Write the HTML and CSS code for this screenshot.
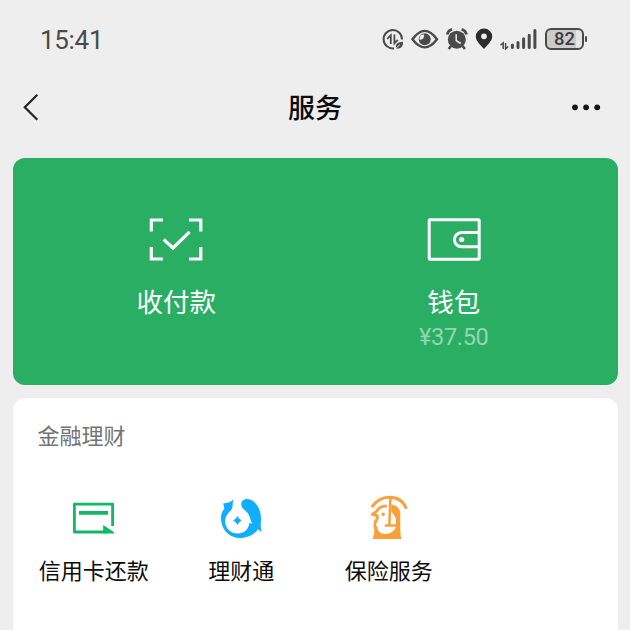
FILE: index.html
```html
<!DOCTYPE html>
<html lang="zh-CN">
<head>
<meta charset="utf-8">
<title>服务</title>
<link rel="stylesheet" href="styles.css">
</head>
<body>
<header class="status">
  <span class="clock">15:41</span>
  <div class="indicators">
    <svg class="i-data" width="22" height="22" viewBox="382 28 22 22" fill="none" stroke="#4a4a4a" stroke-width="2">
      <path d="M402 39.5A9.2 9.2 0 1 0 394 48.3"/>
      <path d="M387.2 39 390.8 35.2V44M394.4 34.5V43.3L397.8 39.8" stroke-width="1.8"/>
      <path d="M396 48.3C394.8 43.8 398 42 403 41.7 403.3 46.5 400.7 49.4 396 48.3Z" fill="#4a4a4a" stroke="none"/>
      <path d="M395 49 400 44.5" stroke="#eee" stroke-width=".9"/>
    </svg>
    <svg class="i-eye" width="28" height="20" viewBox="411 29 28 20">
      <path d="M412.5 39.2Q424.7 22.5 437 39.2 424.7 55.5 412.5 39.2Z" fill="none" stroke="#4a4a4a" stroke-width="2.4"/>
      <circle cx="424.7" cy="39.2" r="6" fill="#4a4a4a"/>
      <path d="M424 34.2A4 4 0 0 1 419.3 39.5L420.3 35.6Z" fill="#eee"/>
    </svg>
    <svg class="i-alarm" width="24" height="24" viewBox="445 27 24 24">
      <circle cx="456.8" cy="39.7" r="9" fill="#4a4a4a"/>
      <path d="M447.2 34.5Q448 30.5 452 29.2M461.6 29.2Q465.6 30.5 466.5 34.5" fill="none" stroke="#4a4a4a" stroke-width="2.7"/>
      <path d="m451 46-2.3 3M462.6 46l2.3 3" stroke="#4a4a4a" stroke-width="2.5"/>
      <path d="M456.2 34.3v6.3l4.5 2.9" fill="none" stroke="#eee" stroke-width="1.5"/>
    </svg>
    <svg class="i-pin" width="18" height="22" viewBox="475 28 18 22">
      <path fill-rule="evenodd" d="M484 49C479 43.5 475.8 40.3 475.8 36.5a8.2 7.9 0 0 1 16.4 0C492.2 40.3 489 43.5 484 49ZM484 33.4a2.9 2.9 0 1 0 0 5.8 2.9 2.9 0 0 0 0-5.8Z" fill="#2c2c2c"/>
    </svg>
    <svg class="i-signal" width="38" height="22" viewBox="500 28 38 22" fill="none" stroke="#4a4a4a">
      <path d="m500.5 45.3 2.7-2.4v6M505.6 42.9v6l2.6-2.4" stroke-width="1.5"/>
      <path d="M512.4 45v2.5M518 42.4v5.1M523.6 38.7v8.8M529.2 35.3v12.2M534.9 30.5v17" stroke-width="3" stroke-linecap="round"/>
    </svg>
    <span class="battery">82</span><i class="battery-cap"></i>
  </div>
</header>

<nav class="navbar">
  <svg class="back" width="20" height="32" viewBox="20 91 20 32" fill="none" stroke="#252525" stroke-width="2.2"><path d="M37.3 94.8 24.8 107.3 37.3 119.8"/></svg>
  <h1>服务</h1>
  <svg class="more" width="30" height="8" viewBox="571 103 30 8" fill="#161616"><circle cx="575" cy="107.3" r="2.9"/><circle cx="586.1" cy="107.3" r="2.9"/><circle cx="597.2" cy="107.3" r="2.9"/></svg>
</nav>

<main>
  <section class="hero">
    <div class="hero-item">
      <svg width="56" height="46" viewBox="148 217 56 46" fill="none" stroke="#fff" stroke-width="3.2">
        <path d="M163 220H151.3v11.5M189 220h11.8v11.5M151.3 247v12H163M200.8 247v12H189"/>
        <path d="m163.7 239.5 9.3 8.5 16.6-16.2"/>
      </svg>
      <span class="hero-name">收付款</span>
    </div>
    <div class="hero-item">
      <svg width="56" height="46" viewBox="426 217 56 46" fill="none" stroke="#fff" stroke-width="3">
        <rect x="429.2" y="219.8" width="50" height="39.4" rx=".8"/>
        <path d="M479 232.5H461.5a7.1 7.1 0 0 0 0 14.2H479"/>
        <circle cx="461.7" cy="239.5" r="2.6" fill="#fff" stroke="none"/>
      </svg>
      <span class="hero-name">钱包</span>
      <span class="balance">¥37.50</span>
    </div>
  </section>

  <section class="card">
    <h2>金融理财</h2>
    <div class="services">
      <div class="service">
        <svg width="50" height="50" viewBox="69 494 50 50">
          <path d="M112.6 526V504.2H74.4V532H107" fill="none" stroke="#10b965" stroke-width="2.8" stroke-linejoin="round"/>
          <path d="M79 511H108v3.8H79ZM103.2 525 114.1 532.2V533.4H103.2Z" fill="#10b965"/>
        </svg>
        <span>信用卡还款</span>
      </div>
      <div class="service">
        <svg width="50" height="50" viewBox="217 494 50 50" fill="#10aeff">
          <path d="M234.6 499.3C231.5 502.5 228 503.3 224.2 503.4L225.4 508.5C222 512.3 221.6 517 222.3 521.5 223.8 531.7 232 538 240.5 538 248.5 538 255.5 534.5 259 529.3L262.8 532.3C262 529 261.5 526.5 261.8 522.5 263.5 509 255.5 499.2 248 499.1 244.3 499 241.8 501.8 242.3 505 242.8 509.5 248 510.5 250 515.2 251.3 518 251.6 520.5 253.3 524L250.3 522.8C250 529 245 533.6 238.8 533.6 231.5 533.6 226.2 528.2 226.2 521.5 226.2 516.5 228.5 513.8 231.5 510.8 235 507.2 232.8 503 234.6 499.3Z"/>
          <path d="M238.4 516.7Q239.2 519.6 242.1 520.5 239.2 521.4 238.4 524.3 237.6 521.4 234.7 520.5 237.6 519.6 238.4 516.7Z" stroke="#10aeff"/>
        </svg>
        <span>理财通</span>
      </div>
      <div class="service">
        <svg width="50" height="50" viewBox="364 494 50 50" fill="none" stroke="#faa03a" stroke-width="3">
          <path d="M371.8 507.2C376.5 500.3 382.5 497.3 389.5 497.3 397.5 497.3 403.5 501.5 406.3 508.8"/>
          <path d="M390.4 497.5 389.3 525.4" stroke-width="2.5"/>
          <path d="M386.8 506.3C382.3 505.5 378.3 507.8 376.8 511.2L372.3 514.5 377.3 515.6V518.5C374.5 521.8 374.6 526.5 375.8 529.5" stroke-width="2.8" stroke-linejoin="round"/>
          <path d="M391.3 504.5C397 505.3 400.3 508.8 400.3 514.5V528C400.3 532 400.6 536 401.5 538.9H372.5C374 536 374.6 532 374.4 526.5L377 526C377.5 531.2 380.3 534 385 534 390.8 534 394.8 530.7 395.7 526.8H384.7V524.3H395.8V518.5C394.8 516 392.8 513.8 391.3 511.3Z" fill="#faa03a" stroke="none"/>
          <circle cx="383.2" cy="514.2" r="1.7" fill="#faa03a" stroke="none"/>
        </svg>
        <span>保险服务</span>
      </div>
    </div>
  </section>
</main>
</body>
</html>
```
FILE: styles.css
```css
* { box-sizing: border-box; }
body {
  margin: 0;
  height: 630px;
  overflow: hidden;
  background: #eee;
  color: #0c0c0c;
  font-family: "Noto Sans CJK SC", sans-serif;
}
svg { display: block; flex: none; }
h1, h2 { margin: 0; font-weight: 400; }

.status {
  height: 78px;
  padding: 0 43px 0 40px;
  display: flex;
  align-items: center;
  justify-content: space-between;
}
.clock {
  font: 26px/30px Roboto, sans-serif;
  letter-spacing: -.3px;
  color: #4a4a4a;
  padding-top: 2px;
}
.indicators { display: flex; align-items: center; height: 24px; }
.i-eye { margin-left: 7px; }
.i-alarm { margin-left: 6px; }
.i-pin { margin-left: 6px; }
.i-signal { margin-left: 7px; }
.battery {
  width: 39px;
  height: 22px;
  margin-left: 7px;
  border: 2px solid #4a4a4a;
  border-radius: 6px;
  background: linear-gradient(90deg, #cbcbcb 82%, #e5e5e5 82%);
  color: #3c3c3c;
  font: 500 18.5px/19px Roboto, sans-serif;
  text-align: center;
}
.battery-cap { width: 2px; height: 6px; margin-left: 1px; border-radius: 1px; background: #4a4a4a; }

.navbar {
  height: 58px;
  padding: 0 29px 0 20px;
  display: grid;
  grid-template-columns: 1fr auto 1fr;
  align-items: center;
}
.navbar h1 { font-size: 27px; line-height: 40px; font-weight: 500; margin-left: 9px; }
.more { justify-self: end; }

main { padding: 21.5px 12.5px 0; }
.hero {
  height: 227.5px;
  padding: 59.5px 25px 0;
  border-radius: 12px;
  background: #2aae64;
  display: grid;
  grid-template-columns: 1fr 1fr;
}
.hero-item { display: flex; flex-direction: column; align-items: center; color: #fff; }
.hero-name { margin-top: 19px; font-size: 26.5px; line-height: 38px; }
.balance {
  margin-top: 3px;
  font: 23.5px/28px Roboto, sans-serif;
  letter-spacing: -.3px;
  color: #94d6b1;
}

.card {
  height: 260px;
  margin-top: 12.5px;
  padding: 17px 7.5px 0;
  border-radius: 12px;
  background: #fff;
}
.card h2 { padding-left: 17.5px; font-size: 22px; line-height: 38px; color: #737373; }
.services { display: grid; grid-template-columns: repeat(4, 147.5px); padding-top: 41.5px; }
.service { display: flex; flex-direction: column; align-items: center; }
.service span { margin-top: 8.5px; font-size: 22px; line-height: 32px; white-space: nowrap; }
```
